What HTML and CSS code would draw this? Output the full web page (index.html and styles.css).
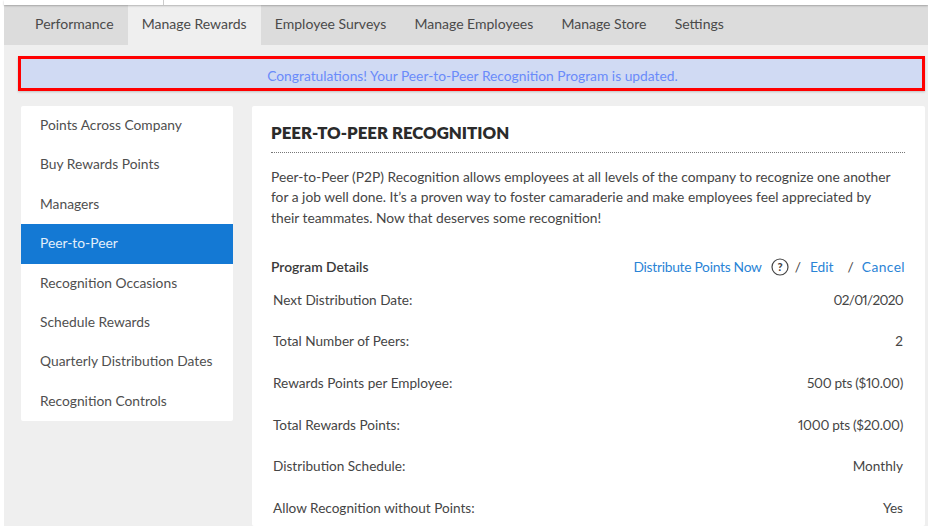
FILE: index.html
```html
<!DOCTYPE html>
<html lang="en">
<head>
<meta charset="utf-8">
<title>Peer-to-Peer Recognition</title>
<link rel="stylesheet" href="styles.css">
</head>
<body>
<div class="topstrip"><span class="topdiv"></span></div>
<nav class="tabs">
  <a class="tab">Performance</a>
  <a class="tab active">Manage Rewards</a>
  <a class="tab">Employee Surveys</a>
  <a class="tab">Manage Employees</a>
  <a class="tab">Manage Store</a>
  <a class="tab">Settings</a>
</nav>
<div class="page">
  <div class="banner">Congratulations! Your Peer-to-Peer Recognition Program is updated.</div>
  <div class="columns">
    <ul class="side">
      <li>Points Across Company</li>
      <li>Buy Rewards Points</li>
      <li>Managers</li>
      <li class="current">Peer-to-Peer</li>
      <li>Recognition Occasions</li>
      <li>Schedule Rewards</li>
      <li>Quarterly Distribution Dates</li>
      <li>Recognition Controls</li>
    </ul>
    <main class="card">
      <h1>PEER-TO-PEER RECOGNITION</h1>
      <p class="intro">Peer-to-Peer (P2P) Recognition allows employees at all levels of the company to recognize one another for a job well done. It’s a proven way to foster camaraderie and make employees feel appreciated by their teammates. Now that deserves some recognition!</p>
      <div class="dethead">
        <strong>Program Details</strong>
        <div class="actions">
          <a class="distribute">Distribute Points Now</a>
          <svg class="help" width="18" height="18" viewBox="0 0 18 18"><circle cx="9" cy="9" r="8" fill="none" stroke="#444" stroke-width="1.2"/><text x="9" y="12.8" text-anchor="middle" class="helpq">?</text></svg>
          <span class="sl">/</span>
          <a class="edit">Edit</a>
          <span class="sl sl2">/</span>
          <a class="cancel">Cancel</a>
        </div>
      </div>
      <dl class="rows">
        <div class="row"><dt>Next Distribution Date:</dt><dd class="date">02/01/2020</dd></div>
        <div class="row"><dt>Total Number of Peers:</dt><dd>2</dd></div>
        <div class="row"><dt>Rewards Points per Employee:</dt><dd class="amount">500 pts ($10.00)</dd></div>
        <div class="row"><dt>Total Rewards Points:</dt><dd class="amount">1000 pts ($20.00)</dd></div>
        <div class="row"><dt>Distribution Schedule:</dt><dd>Monthly</dd></div>
        <div class="row"><dt>Allow Recognition without Points:</dt><dd>Yes</dd></div>
      </dl>
    </main>
  </div>
</div>
</body>
</html>
```

FILE: styles.css
```css
* { box-sizing: border-box; }
html, body { margin: 0; height: 526px; overflow: hidden; }
body {
  background: #fff;
  font-family: Lato, "Liberation Sans", sans-serif;
  font-size: 13.8px;
  color: #454545;
  padding-left: 4px;
}
.topstrip {
  height: 5px;
  background: #fff;
  box-shadow: 0 1px 2px rgba(0,0,0,.25);
  position: relative;
}
.topdiv { display: block; width: 1px; height: 5px; margin-left: 159px; background: #ccc; }
.tabs {
  display: flex;
  height: 40px;
  padding-left: 17px;
  background: #dcdcdc;
}
.tab {
  padding: 0 14.1px;
  line-height: 38px;
  font-size: 14px;
  color: #4a4a4a;
}
.active { background: #efefef; }
.page {
  height: 481px;
  background: #efefef;
  padding: 11px 3px 0 14px;
}
.banner {
  height: 35px;
  border: 3px solid #f00;
  background: #d0daf3;
  color: #6a8bfa;
  text-align: center;
  padding: 2px 0 0 2px;
  line-height: 29px;
  box-shadow: 0 1px 2px rgba(0,0,0,.2);
}
.columns {
  display: flex;
  align-items: flex-start;
  gap: 19px;
  margin: 15px 0 0 3px;
}
.side {
  list-style: none;
  margin: 0;
  padding: 0;
  width: 212px;
  background: #fff;
  border-radius: 2px;
  flex: none;
}
.side li {
  height: 39.4px;
  line-height: 38px;
  padding-left: 19px;
  color: #4f4f4f;
}
.side .current { background: #1479d4; color: #e4effa; }
.card {
  flex: 1;
  height: 420px;
  background: #fff;
  border-radius: 2px;
  padding: 16px 20px 0 19px;
}
h1 {
  margin: 0;
  padding-bottom: 9px;
  font-size: 16.8px;
  line-height: 21px;
  font-weight: 800;
  color: #2b2b2b;
  border-bottom: 1px dotted #777;
}
.intro {
  margin: 14px 0 0;
  padding-right: 4px;
  line-height: 20.3px;
  color: #454545;
}
.dethead {
  display: flex;
  justify-content: space-between;
  align-items: center;
  margin-top: 29px;
  height: 20px;
}
.dethead strong { font-weight: 600; color: #3a3a3a; }
.actions { display: flex; align-items: center; color: #2a84d6; }
.distribute { letter-spacing: -.28px; }
.cancel { letter-spacing: .4px; }
.help { margin: 0 6px 0 9px; }
.helpq { font: 900 11px Lato, sans-serif; fill: #444; }
.sl { color: #444; }
.edit { margin-left: 9px; }
.sl2 { margin: 0 8px 0 14px; }
.rows {
  margin: 13px 2px 0 2px;
  font-size: 13.6px;
  font-variant-numeric: proportional-nums;
}
.row {
  display: flex;
  justify-content: space-between;
  height: 41.6px;
  align-items: flex-start;
  line-height: 20px;
}
dt, dd { margin: 0; }
.date { letter-spacing: -.7px; }
.amount { letter-spacing: -.28px; }
```
